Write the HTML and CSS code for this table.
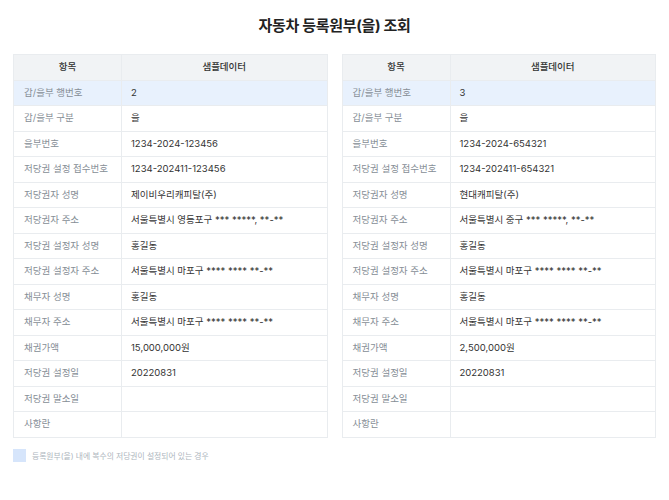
FILE: index.html
```html
<!DOCTYPE html>
<html lang="ko">
<head>
<meta charset="utf-8">
<title>자동차 등록원부(을) 조회</title>
<link rel="stylesheet" href="styles.css">
</head>
<body>
<div class="page">
  <h1 class="title">자동차 등록원부(을) 조회</h1>
  <div class="tables">
    <table class="reg">
      <colgroup><col class="c1"><col></colgroup>
      <thead><tr><th>항목</th><th>샘플데이터</th></tr></thead>
      <tbody>
        <tr class="hl"><td>갑/을부 행번호</td><td>2</td></tr>
        <tr><td>갑/을부 구분</td><td>을</td></tr>
        <tr><td>을부번호</td><td>1234-2024-123456</td></tr>
        <tr><td>저당권 설정 접수번호</td><td>1234-202411-123456</td></tr>
        <tr><td>저당권자 성명</td><td>제이비우리캐피탈(주)</td></tr>
        <tr><td>저당권자 주소</td><td>서울특별시 영등포구 *** *****, **-**</td></tr>
        <tr><td>저당권 설정자 성명</td><td>홍길동</td></tr>
        <tr><td>저당권 설정자 주소</td><td>서울특별시 마포구 **** **** **-**</td></tr>
        <tr><td>채무자 성명</td><td>홍길동</td></tr>
        <tr><td>채무자 주소</td><td>서울특별시 마포구 **** **** **-**</td></tr>
        <tr><td>채권가액</td><td>15,000,000원</td></tr>
        <tr><td>저당권 설정일</td><td>20220831</td></tr>
        <tr><td>저당권 말소일</td><td></td></tr>
        <tr><td>사항란</td><td></td></tr>
      </tbody>
    </table>
    <table class="reg">
      <colgroup><col class="c1"><col></colgroup>
      <thead><tr><th>항목</th><th>샘플데이터</th></tr></thead>
      <tbody>
        <tr class="hl"><td>갑/을부 행번호</td><td>3</td></tr>
        <tr><td>갑/을부 구분</td><td>을</td></tr>
        <tr><td>을부번호</td><td>1234-2024-654321</td></tr>
        <tr><td>저당권 설정 접수번호</td><td>1234-202411-654321</td></tr>
        <tr><td>저당권자 성명</td><td>현대캐피탈(주)</td></tr>
        <tr><td>저당권자 주소</td><td>서울특별시 중구 *** *****, **-**</td></tr>
        <tr><td>저당권 설정자 성명</td><td>홍길동</td></tr>
        <tr><td>저당권 설정자 주소</td><td>서울특별시 마포구 **** **** **-**</td></tr>
        <tr><td>채무자 성명</td><td>홍길동</td></tr>
        <tr><td>채무자 주소</td><td>서울특별시 마포구 **** **** **-**</td></tr>
        <tr><td>채권가액</td><td>2,500,000원</td></tr>
        <tr><td>저당권 설정일</td><td>20220831</td></tr>
        <tr><td>저당권 말소일</td><td></td></tr>
        <tr><td>사항란</td><td></td></tr>
      </tbody>
    </table>
  </div>
  <div class="legend"><span class="swatch"></span><span class="legend-text">등록원부(을) 내에 복수의 저당권이 설정되어 있는 경우</span></div>
</div>
</body>
</html>
```
FILE: styles.css
```css
* { box-sizing: border-box; }
html, body { margin: 0; padding: 0; background: #fff; }
body {
  font-family: Inter, "Noto Sans CJK KR", sans-serif;
  color: #333;
}
.page { padding: 14px 13px 0 13px; }
.title {
  margin: 0;
  text-align: center;
  font-size: 15px;
  font-weight: 700;
  color: #222;
  line-height: 24px;
  letter-spacing: -0.3px;
}
.tables {
  margin-top: 16px;
  display: grid;
  grid-template-columns: 1fr 1fr;
  column-gap: 14px;
}
.reg {
  width: 100%;
  border-collapse: collapse;
  table-layout: fixed;
  font-size: 9.5px;
  border: 1px solid #e9ecef;
}
.reg col.c1 { width: 108px; }
.reg th, .reg td {
  height: 25.5px;
  padding: 0 9px;
  border: 1px solid #e9ecef;
  line-height: 14px;
  vertical-align: middle;
  white-space: nowrap;
}
.reg th {
  background: #f1f3f5;
  font-weight: 500;
  color: #333;
  text-align: center;
}
.reg td:first-child { color: #868e96; padding-left: 10px; }
.reg td:last-child { color: #333; }
.reg tr.hl td { background: #e8f1fd; }
.legend {
  margin-top: 11px;
  display: flex;
  align-items: center;
  gap: 6px;
}
.swatch {
  width: 13px;
  height: 13px;
  background: #d6e5fb;
}
.legend-text {
  font-size: 7.8px;
  color: #adb5bd;
}
```
